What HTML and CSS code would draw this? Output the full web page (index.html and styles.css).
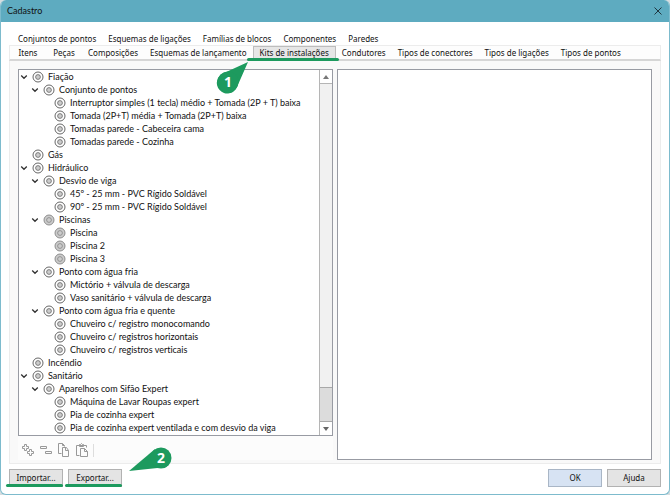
FILE: index.html
```html
<!DOCTYPE html>
<html lang="pt-BR">
<head>
<meta charset="utf-8">
<title>Cadastro</title>
<link rel="stylesheet" href="styles.css">
</head>
<body>
<svg class="defs" aria-hidden="true">
  <symbol id="kit" viewBox="0 0 12 12"><circle cx="6" cy="6" r="5" fill="var(--fill, #fff)" stroke="var(--ring, #555)" stroke-width=".9"/><circle cx="6" cy="6" r="2.4" fill="#ccc" stroke="var(--ring, #666)" stroke-width=".8"/></symbol>
  <symbol id="chev" viewBox="0 0 8 8"><path d="M1.2 2.5 4 5.3l2.8-2.8" fill="none" stroke="#333" stroke-width="1.3"/></symbol>
</svg>
<main class="window">
  <header class="titlebar">
    <h1>Cadastro</h1>
    <button class="close" aria-label="Fechar"><svg viewBox="0 0 8 8"><path d="M.5.5l7 7M7.5.5l-7 7" stroke="#1f3640" fill="none"/></svg></button>
  </header>
  <div class="content">
    <nav class="tabs back">
      <button>Conjuntos de pontos</button><button>Esquemas de ligações</button><button>Famílias de blocos</button><button>Componentes</button><button>Paredes</button>
    </nav>
    <nav class="tabs front">
      <button>Itens</button><button>Peças</button><button>Composições</button><button>Esquemas de lançamento</button><button class="active">Kits de instalações<span class="mark"></span>
        <svg class="callout one" viewBox="0 0 32 32" aria-hidden="true"><path d="M31 0 20 25A10.500 10.500 0 1 1 7 11Z" fill="#1d9a5e"/><circle cx="11" cy="20" r="10.500" fill="#1d9a5e"/><text x="11" y="25">1</text></svg></button><button>Condutores</button><button>Tipos de conectores</button><button>Tipos de ligações</button><button>Tipos de pontos</button>
    </nav>
    <section class="panel">
      <div class="left">
        <div class="treebox">
          <ul class="tree" id="tree">
            <li class="l1"><button aria-label="Recolher"><svg><use href="#chev"/></svg></button><svg class="kit"><use href="#kit"/></svg>Fiação</li>
            <li class="l2"><button aria-label="Recolher"><svg><use href="#chev"/></svg></button><svg class="kit"><use href="#kit"/></svg>Conjunto de pontos</li>
            <li class="l3"><svg class="kit"><use href="#kit"/></svg>Interruptor simples (1 tecla) médio + Tomada (2P + T) baixa</li>
            <li class="l3"><svg class="kit"><use href="#kit"/></svg>Tomada (2P+T) média + Tomada (2P+T) baixa</li>
            <li class="l3"><svg class="kit"><use href="#kit"/></svg>Tomadas parede - Cabeceira cama</li>
            <li class="l3"><svg class="kit"><use href="#kit"/></svg>Tomadas parede - Cozinha</li>
            <li class="l1 leaf"><svg class="kit"><use href="#kit"/></svg>Gás</li>
            <li class="l1"><button aria-label="Recolher"><svg><use href="#chev"/></svg></button><svg class="kit"><use href="#kit"/></svg>Hidráulico</li>
            <li class="l2"><button aria-label="Recolher"><svg><use href="#chev"/></svg></button><svg class="kit"><use href="#kit"/></svg>Desvio de viga</li>
            <li class="l3"><svg class="kit"><use href="#kit"/></svg>45º - 25 mm - PVC Rígido Soldável</li>
            <li class="l3"><svg class="kit"><use href="#kit"/></svg>90º - 25 mm - PVC Rígido Soldável</li>
            <li class="l2 off"><button aria-label="Recolher"><svg><use href="#chev"/></svg></button><svg class="kit"><use href="#kit"/></svg>Piscinas</li>
            <li class="l3 off"><svg class="kit"><use href="#kit"/></svg>Piscina</li>
            <li class="l3 off"><svg class="kit"><use href="#kit"/></svg>Piscina 2</li>
            <li class="l3 off"><svg class="kit"><use href="#kit"/></svg>Piscina 3</li>
            <li class="l2"><button aria-label="Recolher"><svg><use href="#chev"/></svg></button><svg class="kit"><use href="#kit"/></svg>Ponto com água fria</li>
            <li class="l3"><svg class="kit"><use href="#kit"/></svg>Mictório + válvula de descarga</li>
            <li class="l3"><svg class="kit"><use href="#kit"/></svg>Vaso sanitário + válvula de descarga</li>
            <li class="l2"><button aria-label="Recolher"><svg><use href="#chev"/></svg></button><svg class="kit"><use href="#kit"/></svg>Ponto com água fria e quente</li>
            <li class="l3"><svg class="kit"><use href="#kit"/></svg>Chuveiro c/ registro monocomando</li>
            <li class="l3"><svg class="kit"><use href="#kit"/></svg>Chuveiro c/ registros horizontais</li>
            <li class="l3"><svg class="kit"><use href="#kit"/></svg>Chuveiro c/ registros verticais</li>
            <li class="l1 leaf"><svg class="kit"><use href="#kit"/></svg>Incêndio</li>
            <li class="l1"><button aria-label="Recolher"><svg><use href="#chev"/></svg></button><svg class="kit"><use href="#kit"/></svg>Sanitário</li>
            <li class="l2"><button aria-label="Recolher"><svg><use href="#chev"/></svg></button><svg class="kit"><use href="#kit"/></svg>Aparelhos com Sifão Expert</li>
            <li class="l3"><svg class="kit"><use href="#kit"/></svg>Máquina de Lavar Roupas expert</li>
            <li class="l3"><svg class="kit"><use href="#kit"/></svg>Pia de cozinha expert</li>
            <li class="l3"><svg class="kit"><use href="#kit"/></svg>Pia de cozinha expert ventilada e com desvio da viga</li>
          </ul>
          <div class="scroll">
            <button aria-label="Rolar para cima"><svg viewBox="0 0 6 4"><path d="M0 4 3 0l3 4z" fill="#777"/></svg></button>
            <div class="track"></div>
            <div class="thumb"></div>
            <button aria-label="Rolar para baixo"><svg viewBox="0 0 6 4"><path d="M0 0 3 4l3-4z" fill="#666"/></svg></button>
          </div>
        </div>
        <div class="toolbar">
          <button aria-label="Adicionar"><svg viewBox="0 0 14 14"><path d="M3.500 1.500h2v2h2v2h-2v2h-2v-2h-2v-2h2zM8.500 6.500h2v2h2v2h-2v2h-2v-2h-2v-2h2z"/></svg></button>
          <button aria-label="Remover"><svg viewBox="0 0 14 14"><path d="M1.500 3.500h6v2h-6zM6.500 8.500h6v2h-6z"/></svg></button>
          <button aria-label="Copiar"><svg viewBox="0 0 14 14"><path d="M4.500 10.500h-3v-10h4l2 2v1M5.500.5v2h2M5.500 4.500h4l2 3v6h-6zM8.500 4.500v3h3"/></svg></button>
          <button aria-label="Colar"><svg viewBox="0 0 14 14"><path d="M4.500 12.500h-3v-10h10v2M4.500 3.500v-2h1l1-1 1 1h1v2zM5.500 5.500h4l3 3v5h-7zM9.500 5.500v3h3"/></svg></button>
          <span class="sep"></span>
        </div>
      </div>
      <div class="preview"></div>
    </section>
    <footer class="actions">
      <button class="btn">Importar...<span class="mark"></span></button>
      <button class="btn">Exportar...<span class="mark"></span>
        <svg class="callout two" viewBox="0 0 44 24" aria-hidden="true"><path d="M0 24 26 2 38 20Z" fill="#1d9a5e"/><circle cx="32" cy="11" r="10.500" fill="#1d9a5e"/><text x="32" y="16">2</text></svg></button>
      <span class="spring"></span>
      <button class="btn primary">OK</button>
      <button class="btn">Ajuda</button>
    </footer>
  </div>
</main>
</body>
</html>
```
FILE: styles.css
```css
* { box-sizing: border-box; }
body { margin: 0; background: #d5dde0; color: #111; font: 9px/12px Lato, "Open Sans", sans-serif; font-variant-ligatures: none; }
button { margin: 0; padding: 0; border: 0; background: none; color: inherit; font: inherit; }
svg { display: block; }
.defs { position: absolute; width: 0; height: 0; }
.window { display: flex; flex-direction: column; min-height: 100vh; border: 1px solid #7dbbcd; border-top: 0; border-radius: 6px; overflow: hidden; background: #fff; }
.titlebar { display: flex; align-items: center; justify-content: space-between; height: 22px; padding: 0 7px 0 6px; background: #5eabc0; }
.titlebar h1 { margin: 0; font-size: 9px; font-weight: 400; }
.close svg { width: 8px; height: 8px; }
.content { display: flex; flex: 1; flex-direction: column; padding: 11px 8px 7px; }
.tabs { display: flex; font-family: "Noto Sans", sans-serif; font-size: 8px; }
.tabs button { position: relative; min-width: 36px; padding: 0 6px; white-space: nowrap; }
.back { height: 12px; padding-left: 3px; }
.front { height: 16px; border: 1px solid #ececec; border-bottom: 2px solid #d6d6d6; background: #fdfdfd; }
.front .active { border: 1px solid #bdbdbd; border-bottom: 0; background: #e6e6e6; }
.mark { position: absolute; right: -1px; bottom: -1px; left: -4px; height: 3px; border-radius: 2px; background: #1d9a5e; }
.active .mark { right: -4px; bottom: -2px; left: -7px; }
.callout { position: absolute; z-index: 1; overflow: visible; }
.callout text { fill: #fff; font: bold 14px "Open Sans", sans-serif; text-anchor: middle; }
.one { top: 15px; left: -37px; width: 32px; height: 32px; }
.two { top: -23px; left: 60px; width: 44px; height: 24px; }
.panel { display: flex; flex: 1; gap: 4px; padding: 8px 8px 3px; border: 1px solid #ececec; border-top: 0; background: #f9f9f9; }
.left, .preview { flex: 1; }
.left { display: flex; flex-basis: 2px; flex-direction: column; }
.treebox { display: flex; flex: 1; border: 1px solid #989ba3; background: #fff; }
.tree { display: flex; flex: 1; flex-direction: column; margin: 0; padding: 0; list-style: none; }
.tree li { display: flex; flex: 1; align-items: center; white-space: nowrap; }
.tree li button { width: 8px; margin-right: 4px; }
.tree li button svg { width: 8px; height: 8px; }
.tree .kit { width: 12px; height: 12px; margin-right: 4px; }
.l1 { padding-left: 1px; }
.l1.leaf { padding-left: 13px; }
.l2 { padding-left: 12px; }
.l3 { padding-left: 35px; }
.off { --ring: #858585; --fill: #ccc; }
.scroll { display: flex; flex-direction: column; width: 13px; border-left: 1px solid #b5b5b5; background: #f1f1f1; }
.scroll button { display: grid; place-items: center; height: 13px; background: #fff; }
.scroll button svg { width: 6px; height: 4px; }
.track { flex: 6; border-top: 1px solid #b5b5b5; }
.thumb { flex: 0 0 35px; border: solid #a8a8a8; border-width: 1px 0; background: #dcdcdc; }
.toolbar { display: flex; align-items: center; gap: 4px; height: 24px; padding: 4px 3px 0; background: #fcfcfc; }
.toolbar svg { width: 14px; height: 14px; fill: none; stroke: #999; }
.sep { width: 1px; height: 13px; background: #ddd; }
.preview { border: 1px solid #989ba3; background: #fff; }
.actions { display: flex; gap: 5px; padding-top: 5px; }
.btn { position: relative; width: 54px; height: 18px; border: 1px solid #b2b2b2; background: #e4e4e4; font-family: "Noto Sans", sans-serif; font-size: 8px; }
.primary { border-color: #a9b6c6; background: #d7e3f3; }
.spring { flex: 1; }
```
